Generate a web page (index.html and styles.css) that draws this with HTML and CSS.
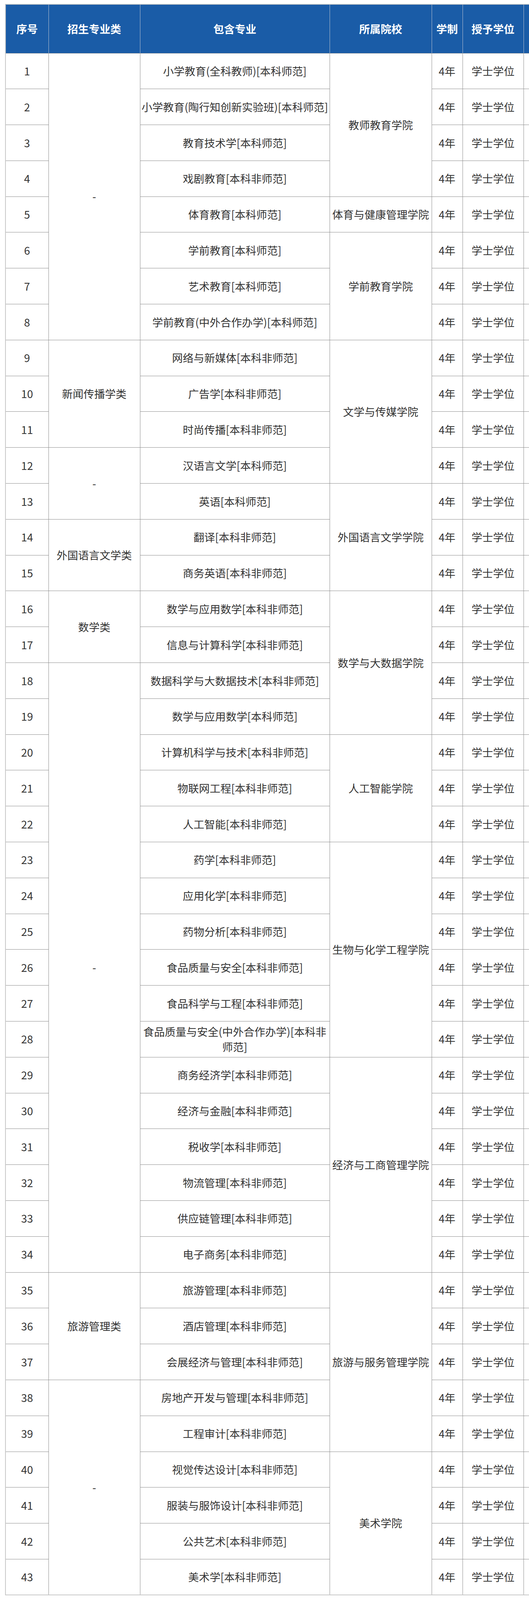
FILE: index.html
```html
<!DOCTYPE html>
<html lang="zh-CN">
<head>
<meta charset="utf-8">
<title>招生专业</title>
<link rel="stylesheet" href="styles.css">
</head>
<body>
<div class="wrap">
<table class="majors">
<colgroup>
<col class="c-no"><col class="c-cat"><col class="c-major"><col class="c-school"><col class="c-years"><col class="c-degree"><col class="c-extra">
</colgroup>
<thead>
<tr><th>序号</th><th>招生专业类</th><th>包含专业</th><th>所属院校</th><th>学制</th><th>授予学位</th><th></th></tr>
</thead>
<tbody>
<tr><td>1</td><td rowspan="8">-</td><td>小学教育(全科教师)[本科师范]</td><td rowspan="4">教师教育学院</td><td>4年</td><td>学士学位</td><td></td></tr>
<tr><td>2</td><td>小学教育(陶行知创新实验班)[本科师范]</td><td>4年</td><td>学士学位</td><td></td></tr>
<tr><td>3</td><td>教育技术学[本科师范]</td><td>4年</td><td>学士学位</td><td></td></tr>
<tr><td>4</td><td>戏剧教育[本科非师范]</td><td>4年</td><td>学士学位</td><td></td></tr>
<tr><td>5</td><td>体育教育[本科师范]</td><td>体育与健康管理学院</td><td>4年</td><td>学士学位</td><td></td></tr>
<tr><td>6</td><td>学前教育[本科师范]</td><td rowspan="3">学前教育学院</td><td>4年</td><td>学士学位</td><td></td></tr>
<tr><td>7</td><td>艺术教育[本科师范]</td><td>4年</td><td>学士学位</td><td></td></tr>
<tr><td>8</td><td>学前教育(中外合作办学)[本科师范]</td><td>4年</td><td>学士学位</td><td></td></tr>
<tr><td>9</td><td rowspan="3">新闻传播学类</td><td>网络与新媒体[本科非师范]</td><td rowspan="4">文学与传媒学院</td><td>4年</td><td>学士学位</td><td></td></tr>
<tr><td>10</td><td>广告学[本科非师范]</td><td>4年</td><td>学士学位</td><td></td></tr>
<tr><td>11</td><td>时尚传播[本科非师范]</td><td>4年</td><td>学士学位</td><td></td></tr>
<tr><td>12</td><td rowspan="2">-</td><td>汉语言文学[本科师范]</td><td>4年</td><td>学士学位</td><td></td></tr>
<tr><td>13</td><td>英语[本科师范]</td><td rowspan="3">外国语言文学学院</td><td>4年</td><td>学士学位</td><td></td></tr>
<tr><td>14</td><td rowspan="2">外国语言文学类</td><td>翻译[本科非师范]</td><td>4年</td><td>学士学位</td><td></td></tr>
<tr><td>15</td><td>商务英语[本科非师范]</td><td>4年</td><td>学士学位</td><td></td></tr>
<tr><td>16</td><td rowspan="2">数学类</td><td>数学与应用数学[本科非师范]</td><td rowspan="4">数学与大数据学院</td><td>4年</td><td>学士学位</td><td></td></tr>
<tr><td>17</td><td>信息与计算科学[本科非师范]</td><td>4年</td><td>学士学位</td><td></td></tr>
<tr><td>18</td><td rowspan="17">-</td><td>数据科学与大数据技术[本科非师范]</td><td>4年</td><td>学士学位</td><td></td></tr>
<tr><td>19</td><td>数学与应用数学[本科师范]</td><td>4年</td><td>学士学位</td><td></td></tr>
<tr><td>20</td><td>计算机科学与技术[本科非师范]</td><td rowspan="3">人工智能学院</td><td>4年</td><td>学士学位</td><td></td></tr>
<tr><td>21</td><td>物联网工程[本科非师范]</td><td>4年</td><td>学士学位</td><td></td></tr>
<tr><td>22</td><td>人工智能[本科非师范]</td><td>4年</td><td>学士学位</td><td></td></tr>
<tr><td>23</td><td>药学[本科非师范]</td><td rowspan="6">生物与化学工程学院</td><td>4年</td><td>学士学位</td><td></td></tr>
<tr><td>24</td><td>应用化学[本科非师范]</td><td>4年</td><td>学士学位</td><td></td></tr>
<tr><td>25</td><td>药物分析[本科非师范]</td><td>4年</td><td>学士学位</td><td></td></tr>
<tr><td>26</td><td>食品质量与安全[本科非师范]</td><td>4年</td><td>学士学位</td><td></td></tr>
<tr><td>27</td><td>食品科学与工程[本科非师范]</td><td>4年</td><td>学士学位</td><td></td></tr>
<tr><td>28</td><td>食品质量与安全(中外合作办学)[本科非师范]</td><td>4年</td><td>学士学位</td><td></td></tr>
<tr><td>29</td><td>商务经济学[本科非师范]</td><td rowspan="6">经济与工商管理学院</td><td>4年</td><td>学士学位</td><td></td></tr>
<tr><td>30</td><td>经济与金融[本科非师范]</td><td>4年</td><td>学士学位</td><td></td></tr>
<tr><td>31</td><td>税收学[本科非师范]</td><td>4年</td><td>学士学位</td><td></td></tr>
<tr><td>32</td><td>物流管理[本科非师范]</td><td>4年</td><td>学士学位</td><td></td></tr>
<tr><td>33</td><td>供应链管理[本科非师范]</td><td>4年</td><td>学士学位</td><td></td></tr>
<tr><td>34</td><td>电子商务[本科非师范]</td><td>4年</td><td>学士学位</td><td></td></tr>
<tr><td>35</td><td rowspan="3">旅游管理类</td><td>旅游管理[本科非师范]</td><td rowspan="5">旅游与服务管理学院</td><td>4年</td><td>学士学位</td><td></td></tr>
<tr><td>36</td><td>酒店管理[本科非师范]</td><td>4年</td><td>学士学位</td><td></td></tr>
<tr><td>37</td><td>会展经济与管理[本科非师范]</td><td>4年</td><td>学士学位</td><td></td></tr>
<tr><td>38</td><td rowspan="6">-</td><td>房地产开发与管理[本科非师范]</td><td>4年</td><td>学士学位</td><td></td></tr>
<tr><td>39</td><td>工程审计[本科非师范]</td><td>4年</td><td>学士学位</td><td></td></tr>
<tr><td>40</td><td>视觉传达设计[本科非师范]</td><td rowspan="4">美术学院</td><td>4年</td><td>学士学位</td><td></td></tr>
<tr><td>41</td><td>服装与服饰设计[本科非师范]</td><td>4年</td><td>学士学位</td><td></td></tr>
<tr><td>42</td><td>公共艺术[本科非师范]</td><td>4年</td><td>学士学位</td><td></td></tr>
<tr><td>43</td><td>美术学[本科非师范]</td><td>4年</td><td>学士学位</td><td></td></tr>
</tbody>
</table>
</div>
</body>
</html>
```
FILE: styles.css
```css
html, body {
  margin: 0;
  padding: 0;
  background: #ffffff;
}

.wrap {
  padding: 10px 0 10px 13px;
  overflow: hidden;
}

.majors {
  border-collapse: collapse;
  table-layout: fixed;
  width: 1530px;
  border: 2px solid #c8c8c8;
  font-family: "Noto Sans CJK SC", "Microsoft YaHei", sans-serif;
  font-size: 27.5px;
  color: #333333;
}

.c-no { width: 110px; }
.c-cat { width: 234px; }
.c-major { width: 485px; }
.c-school { width: 261px; }
.c-years { width: 79px; }
.c-degree { width: 156px; }
.c-extra { width: 205px; }

.majors thead tr {
  height: 125px;
}

.majors tbody tr {
  height: 91.8px;
}

.majors th {
  background: #1a5ca7;
  color: #ffffff;
  font-weight: 700;
  text-align: center;
  vertical-align: middle;
  padding: 0 2px;
  border: 1px solid #b4bfcf;
  border-bottom-color: #9a9a9a;
  line-height: 1.3;
}

.majors td {
  padding: 0 2px;
  text-align: center;
  vertical-align: middle;
  border: 1px solid #8e8e8e;
  line-height: 1.45;
  letter-spacing: 0;
}
```
